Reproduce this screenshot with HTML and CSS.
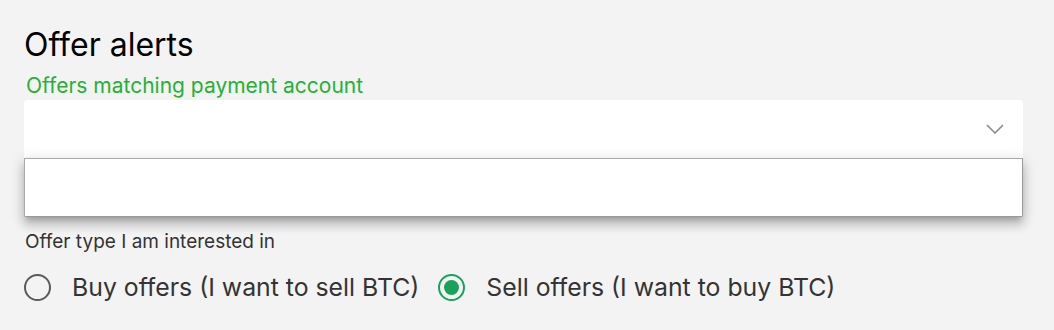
FILE: index.html
```html
<!DOCTYPE html>
<html lang="en">
<head>
<meta charset="utf-8">
<title>Offer alerts</title>
<link rel="stylesheet" href="styles.css">
</head>
<body>
<main class="page">
  <h1 class="title">Offer alerts</h1>
  <label class="field-label">Offers matching payment account</label>
  <div class="select-wrap">
    <div class="select">
      <svg class="chevron" width="18" height="10" viewBox="0 0 18 10"><path d="M1 1 L9 9 L17 1" fill="none" stroke="#8a8a8a" stroke-width="1.6"/></svg>
    </div>
    <div class="menu"></div>
  </div>
  <div class="subtitle">Offer type I am interested in</div>
  <div class="radios">
    <label class="radio"><span class="circle"></span><span class="radio-text">Buy offers (I want to sell BTC)</span></label>
    <label class="radio selected"><span class="circle"><span class="dot"></span></span><span class="radio-text">Sell offers (I want to buy BTC)</span></label>
  </div>
</main>
</body>
</html>
```
FILE: styles.css
```css
html, body {
  margin: 0;
  padding: 0;
  background: #f3f3f3;
}
body {
  font-family: Inter, "Noto Sans", sans-serif;
  color: #333;
}
.page {
  padding: 24px 31px 0 24px;
}
.title {
  margin: 0;
  font-weight: 400;
  font-size: 32px;
  line-height: 42px;
  color: #000;
}
.field-label {
  display: block;
  margin-top: 6px;
  font-size: 21px;
  line-height: 28px;
  color: #25b135;
  padding-left: 2px;
}
.select-wrap {
  position: relative;
}
.select {
  height: 58px;
  background: #fff;
  border-radius: 4px 4px 0 0;
  border-bottom: 2px solid #25b135;
  display: flex;
  align-items: center;
  justify-content: flex-end;
  padding-right: 19px;
}
.chevron {
  display: block;
}
.menu {
  position: absolute;
  left: 0;
  right: 0;
  top: 58px;
  height: 57px;
  background: #fff;
  border: 1px solid #aaa;
  border-right-color: #999;
  border-bottom-color: #999;
  border-radius: 1px 1px 2px 2px;
  box-shadow: 0 5px 5px -3px rgba(0,0,0,.2), 0 8px 10px 1px rgba(0,0,0,.14), 0 3px 14px 2px rgba(0,0,0,.12);
}
.subtitle {
  margin-top: 70px;
  font-size: 19px;
  line-height: 24px;
  color: #333;
  padding-left: 1px;
}
.radios {
  display: flex;
  align-items: center;
  gap: 19px;
  margin-top: 18px;
}
.radio {
  display: flex;
  align-items: center;
  gap: 21px;
}
.circle {
  box-sizing: border-box;
  width: 27px;
  height: 27px;
  border: 2px solid #5a5a5a;
  border-radius: 50%;
  display: flex;
  align-items: center;
  justify-content: center;
}
.selected .circle {
  border-color: #1aa15a;
}
.dot {
  width: 15px;
  height: 15px;
  border-radius: 50%;
  background: #1aa15a;
}
.radio-text {
  font-size: 24.8px;
  line-height: 30px;
  color: #333;
}
```
